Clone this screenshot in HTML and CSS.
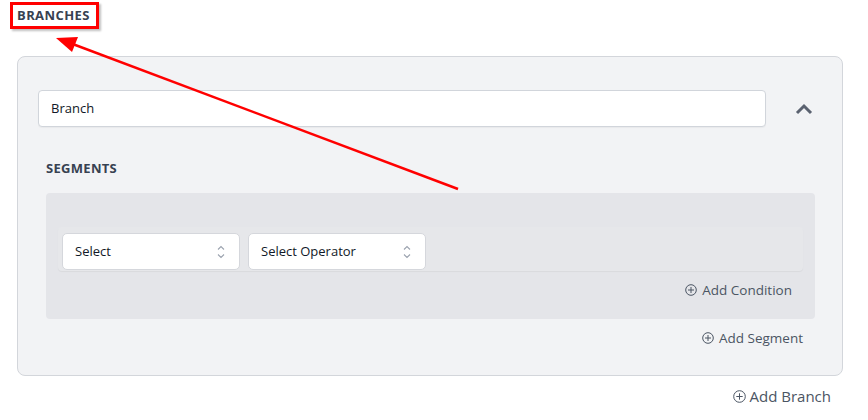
FILE: index.html
```html
<!DOCTYPE html>
<html>
<head>
<meta charset="utf-8">
<link rel="stylesheet" href="styles.css">
</head>
<body>
<div class="page">
  <h2 class="section-title">BRANCHES</h2>
  <div class="panel">
    <div class="branch-head">
      <div class="text-input">Branch</div>
      <button class="collapse">
        <svg width="18" height="12" viewBox="0 0 18 12"><path d="M2 10 L9 3 L16 10" fill="none" stroke="#5b6270" stroke-width="3"/></svg>
      </button>
    </div>
    <div class="segments">
      <h3 class="sub-title">SEGMENTS</h3>
      <div class="segment-box">
        <div class="condition-row">
          <div class="select">Select<svg class="sort" width="10" height="16" viewBox="0 0 10 16"><path d="M2 5.5 L5 2.5 L8 5.5 M2 10.5 L5 13.5 L8 10.5" fill="none" stroke="#9ca3af" stroke-width="1.1"/></svg></div>
          <div class="select">Select Operator<svg class="sort" width="10" height="16" viewBox="0 0 10 16"><path d="M2 5.5 L5 2.5 L8 5.5 M2 10.5 L5 13.5 L8 10.5" fill="none" stroke="#9ca3af" stroke-width="1.1"/></svg></div>
        </div>
        <div class="action a-cond"><svg width="12" height="12" viewBox="0 0 12 12"><circle cx="6" cy="6" r="5.3" fill="none" stroke="#4b5563" stroke-width="1"/><path d="M6 3 V9 M3 6 H9" stroke="#4b5563" stroke-width="1"/></svg>Add Condition</div>
      </div>
      <div class="action a-seg"><svg width="12" height="12" viewBox="0 0 12 12"><circle cx="6" cy="6" r="5.3" fill="none" stroke="#4b5563" stroke-width="1"/><path d="M6 3 V9 M3 6 H9" stroke="#4b5563" stroke-width="1"/></svg>Add Segment</div>
    </div>
  </div>
  <div class="action a-branch"><svg width="13" height="13" viewBox="0 0 13 13"><circle cx="6.5" cy="6.5" r="5.8" fill="none" stroke="#4b5563" stroke-width="1"/><path d="M6.5 3.3 V9.7 M3.3 6.5 H9.7" stroke="#4b5563" stroke-width="1"/></svg>Add Branch</div>
</div>
<div class="mark-box"></div>
<svg class="mark-arrow" width="868" height="420" viewBox="0 0 868 420">
  <line x1="458" y1="189" x2="70" y2="43" stroke="#ff0000" stroke-width="2.5"/>
  <polygon points="56,38 78,37 72,52" fill="#ff0000"/>
</svg>
</body>
</html>
```
FILE: styles.css
```css
html, body {
  margin: 0;
  padding: 0;
  background: #ffffff;
}
body {
  font-family: "Open Sans", "Noto Sans", sans-serif;
  color: #374151;
  position: relative;
  width: 868px;
  height: 420px;
  overflow: hidden;
}
.page {
  width: 826px;
  padding: 0 0 0 17px;
}
.section-title {
  margin: 0;
  padding-top: 6px;
  height: 56px;
  box-sizing: border-box;
  font-size: 13px;
  font-weight: 700;
  letter-spacing: 0.4px;
  color: #374151;
  line-height: 18px;
}
.panel {
  background: #f2f3f5;
  border: 1px solid #d3d6db;
  border-radius: 8px;
  height: 320px;
  box-sizing: border-box;
  padding-top: 33px;
}
.branch-head {
  display: flex;
  align-items: center;
  padding-left: 20px;
}
.text-input {
  flex: 1;
  height: 37px;
  box-sizing: border-box;
  background: #fff;
  border: 1px solid #d1d5db;
  border-radius: 4px;
  font-size: 13px;
  line-height: 35px;
  padding-left: 12px;
  color: #111827;
  box-shadow: 0 1px 1px rgba(0,0,0,0.04);
}
.collapse {
  width: 76px;
  height: 37px;
  border: 0;
  background: none;
  padding: 0;
  display: flex;
  align-items: center;
  justify-content: center;
}
.segments {
  padding: 0 27px 0 28px;
}
.sub-title {
  margin: 0;
  padding-top: 32px;
  height: 66px;
  box-sizing: border-box;
  font-size: 13px;
  font-weight: 700;
  letter-spacing: 0.3px;
  color: #374151;
  line-height: 18px;
}
.segment-box {
  background: #e4e5e9;
  border-radius: 4px;
  height: 126px;
  box-sizing: border-box;
  padding: 34px 12px 0 12px;
}
.condition-row {
  height: 44px;
  box-sizing: border-box;
  border-radius: 4px;
  background: #e6e7ea;
  box-shadow: 0 1px 1px rgba(0,0,0,0.05);
  display: flex;
  gap: 8px;
  padding: 6px 4px;
}
.select {
  width: 178px;
  height: 37px;
  box-sizing: border-box;
  background: #fff;
  border: 1px solid #d5d7dc;
  border-radius: 5px;
  font-size: 13px;
  line-height: 35px;
  padding: 0 0 0 12px;
  color: #111827;
  display: flex;
  align-items: center;
  justify-content: space-between;
}
.sort {
  margin-right: 13px;
}
.action {
  display: flex;
  align-items: center;
  justify-content: flex-end;
  gap: 5px;
  font-size: 13.5px;
  color: #4b5563;
}
.a-cond {
  height: 38px;
  padding-right: 11px;
}
.a-seg {
  height: 37px;
  padding-right: 12px;
}
.a-branch {
  height: 40px;
  font-size: 15px;
  padding-right: 12px;
  gap: 4px;
}
.mark-box {
  position: absolute;
  left: 10px;
  top: 2px;
  width: 89px;
  height: 27px;
  box-sizing: border-box;
  border: 3px solid #ff0000;
  box-shadow: 2px 2px 2px rgba(0,0,0,0.25);
}
.mark-arrow {
  position: absolute;
  left: 0;
  top: 0;
  pointer-events: none;
}
```
